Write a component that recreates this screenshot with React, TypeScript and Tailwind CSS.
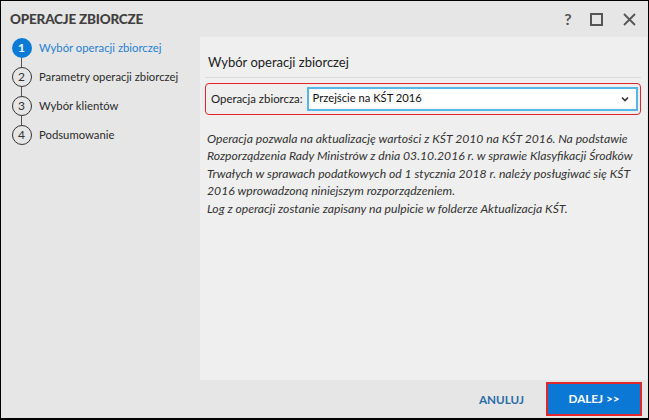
import { useState } from "react";

const steps = [
  { no: 1, label: "Wybór operacji zbiorczej" },
  { no: 2, label: "Parametry operacji zbiorczej" },
  { no: 3, label: "Wybór klientów" },
  { no: 4, label: "Podsumowanie" },
];

function Chevron() {
  return (
    <svg width="10" height="10" viewBox="0 0 10 10" className="text-[#333]">
      <path d="M2 3.5 L5 6.5 L8 3.5" fill="none" stroke="currentColor" strokeWidth="1.6" />
    </svg>
  );
}

export default function App() {
  const [active] = useState(1);
  return (
    <div
      className="w-[649px] h-[420px] border border-b-2 border-black bg-[#e6e6e6] flex flex-col overflow-hidden"
      style={{ fontFamily: 'Lato, "Noto Sans", sans-serif' }}
    >
      {/* title bar */}
      <div className="h-[36px] flex items-center pl-[9px] pr-[12px] shrink-0">
        <div className="text-[13.5px] font-black text-[#404040] tracking-[-0.2px]">OPERACJE ZBIORCZE</div>
        <div className="ml-auto flex items-center text-[#555]">
          <span className="text-[16px] font-bold w-[20px] text-center mr-[12px]">?</span>
          <span className="w-[13px] h-[13px] border-2 border-[#555] mr-[20px]"></span>
          <svg width="13" height="13" viewBox="0 0 13 13">
            <path d="M1 1 L12 12 M12 1 L1 12" stroke="#555" strokeWidth="1.8" />
          </svg>
        </div>
      </div>

      <div className="flex flex-1 min-h-0">
        {/* sidebar */}
        <div className="w-[199px] shrink-0 pl-[10px] pt-px">
          {steps.map((s, i) => (
            <div key={s.no} className="flex items-start">
              <div className="flex flex-col items-center w-[21px]">
                {s.no === active ? (
                  <div className="w-[20px] h-[20px] rounded-full bg-[#0a7bd6] text-white text-[12px] font-bold flex items-center justify-center">
                    {s.no}
                  </div>
                ) : (
                  <div className="w-[20px] h-[20px] rounded-full border-[1.5px] border-[#333] text-[#333] text-[12px] flex items-center justify-center">
                    {s.no}
                  </div>
                )}
                {i < steps.length - 1 && <div className="w-px h-[9px] bg-[#555]"></div>}
              </div>
              <div
                className={
                  "ml-[7px] text-[11.3px] leading-[20px] whitespace-nowrap " +
                  (s.no === active ? "text-[#1f7fd4]" : "text-[#2b2b2b]")
                }
              >
                {s.label}
              </div>
            </div>
          ))}
        </div>

        {/* content */}
        <div className="flex-1 flex flex-col">
          <div className="h-[343px] bg-[#efefef] mr-[1px] pl-[5px] pr-[6px] pt-[16px]">
            <div className="text-[13px] text-[#222] pl-[3px] pb-[4px] border-b border-[#dadada]">Wybór operacji zbiorczej</div>
            <div className="mt-[5px] h-[32px] rounded-[4px] border border-[#e2262b] flex items-center pl-[5px] pr-[2px]">
              <span className="text-[11.4px] text-[#222] mr-[4px]">Operacja zbiorcza:</span>
              <div className="flex-1 h-[24px] bg-white border-2 border-[#55b7e8] flex items-center pl-[4px] pr-[6px]">
                <span className="text-[11.2px] text-[#111]">Przejście na KŚT 2016</span>
                <span className="ml-auto">
                  <Chevron />
                </span>
              </div>
            </div>
            <div className="mt-[15px] pl-[2px] text-[12.2px] leading-[17.5px] italic text-[#333]">
              Operacja pozwala na aktualizację wartości z KŚT 2010 na KŚT 2016. Na podstawie
              <br />
              Rozporządzenia Rady Ministrów z dnia 03.10.2016 r. w sprawie Klasyfikacji Środków
              <br />
              Trwałych w sprawach podatkowych od 1 stycznia 2018 r. należy posługiwać się KŚT
              <br />
              2016 wprowadzoną niniejszym rozporządzeniem.
              <br />
              Log z operacji zostanie zapisany na pulpicie w folderze Aktualizacja KŚT.
            </div>
          </div>
          <div className="flex-1 flex items-start justify-end pr-[6px] pt-[2px]">
            <button className="mt-[2px] h-[32px] px-[10px] mr-[12px] text-[11.7px] font-bold text-[#2a6ea6]">ANULUJ</button>
            <button className="h-[34px] w-[96px] border-2 border-[#e2262b] bg-[#0a78d4] text-white text-[11.7px] font-bold">
              DALEJ &gt;&gt;
            </button>
          </div>
        </div>
      </div>
    </div>
  );
}
